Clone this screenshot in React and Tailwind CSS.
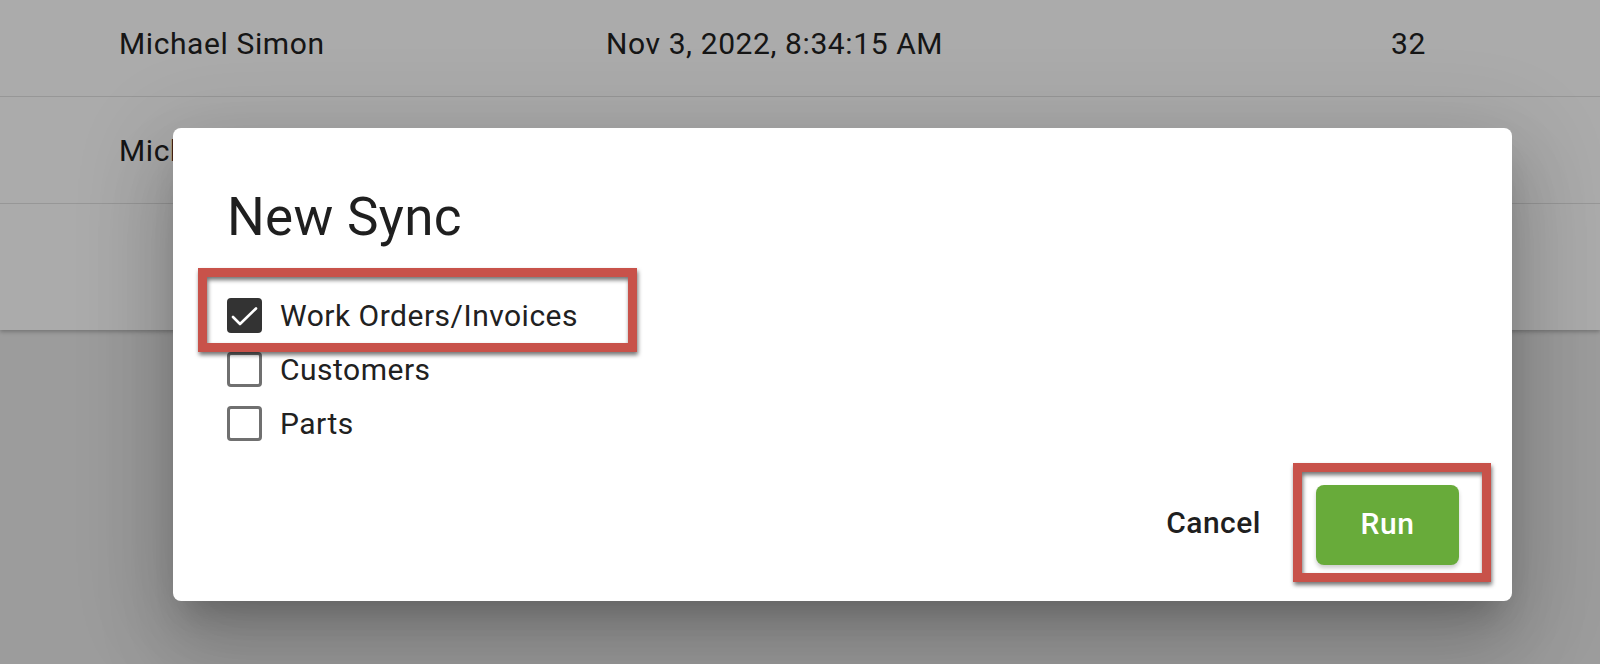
import React from "react";

const rows = [
  { name: "Michael Simon", date: "Nov 3, 2022, 8:34:15 AM", count: "32" },
  { name: "Michael Simon", date: "Nov 3, 2022, 8:12:40 AM", count: "18" },
];

function Checkbox({ checked }) {
  if (checked) {
    return (
      <span className="flex h-[35px] w-[35px] shrink-0 items-center justify-center rounded-[4px] bg-[#333333]">
        <svg width="35" height="35" viewBox="0 0 35 35" fill="none">
          <path d="M6 19 L13 26 L29 10.5" stroke="#ffffff" strokeWidth="2.6" strokeLinecap="round" strokeLinejoin="round" />
        </svg>
      </span>
    );
  }
  return <span className="h-[35px] w-[35px] shrink-0 rounded-[4px] border-[3px] border-[#707070] bg-white" />;
}

export default function App() {
  return (
    <div className="relative h-[664px] w-full overflow-hidden bg-[#e9e9e9] font-['Roboto','Liberation_Sans',sans-serif] text-[#212121]">
      {/* background table card */}
      <div className="h-[330px] overflow-hidden bg-white shadow-[0_2px_4px_rgba(0,0,0,0.25)]">
        <div className="-mt-[10px]">
          {rows.map((r, i) => (
            <div key={i} className="grid h-[107px] grid-cols-[487px_785px_auto] items-center border-b border-[#e2e2e2] pl-[119px] text-[30px] leading-[35px] tracking-[0.6px]">
              <span>{r.name}</span>
              <span>{r.date}</span>
              <span>{r.count}</span>
            </div>
          ))}
        </div>
      </div>

      {/* modal backdrop */}
      <div className="absolute inset-0 bg-black/[0.33]" />

      {/* dialog */}
      <div className="absolute left-[173px] top-[128px] flex h-[473px] w-[1339px] flex-col rounded-[8px] bg-white shadow-[0_22px_30px_-14px_rgba(0,0,0,0.2),0_48px_76px_6px_rgba(0,0,0,0.14),0_18px_92px_16px_rgba(0,0,0,0.12)]">
        <h2 className="pl-[54px] pt-[58px] text-[53px] font-normal leading-[62px] tracking-[0.3px] text-[#1f1f1f]">New Sync</h2>
        <div className="mt-[40px] flex flex-col pl-[54px]">
          {[
            { label: "Work Orders/Invoices", checked: true },
            { label: "Customers", checked: false },
            { label: "Parts", checked: false },
          ].map((o) => (
            <label key={o.label} className="flex h-[54px] items-center gap-[18px] text-[30px] leading-[35px] tracking-[0.5px]">
              <Checkbox checked={o.checked} />
              <span>{o.label}</span>
            </label>
          ))}
        </div>
        <div className="mt-auto flex items-center justify-end gap-[39px] pb-[37px] pr-[53px]">
          <button className="flex h-[80px] items-center px-[16px] pb-[3px] text-[30px] font-medium tracking-[0.5px] text-[#1f1f1f]">Cancel</button>
          <button className="-mb-[2px] flex h-[80px] w-[143px] items-center justify-center rounded-[8px] bg-[#68ab3a] pb-[3px] text-[30px] font-medium tracking-[0.5px] text-white shadow-[0_3px_4px_rgba(0,0,0,0.2)]">
            Run
          </button>
        </div>
      </div>

      {/* annotation boxes */}
      <div className="absolute left-[198px] top-[268px] h-[84px] w-[439px] border-[9px] border-[#c8524a] drop-shadow-[1px_3px_2px_rgba(0,0,0,0.55)]" />
      <div className="absolute left-[1293px] top-[463px] h-[119px] w-[198px] border-[9px] border-[#c8524a] drop-shadow-[1px_3px_2px_rgba(0,0,0,0.55)]" />
    </div>
  );
}
